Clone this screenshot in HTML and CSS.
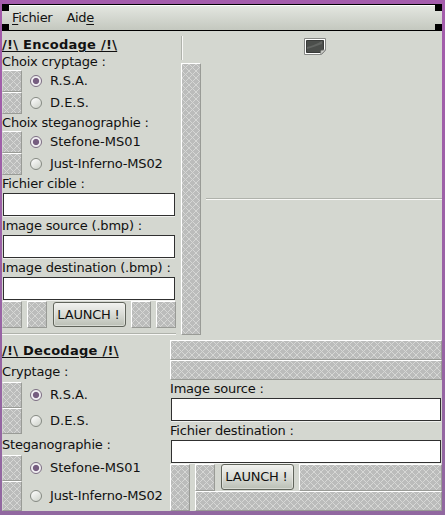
FILE: index.html
```html
<!DOCTYPE html>
<html lang="fr">
<head>
<meta charset="utf-8">
<title>Encodage / Decodage</title>
<link rel="stylesheet" href="styles.css">
</head>
<body>
<div class="window">
  <nav class="menubar"><span class="menu"><u>F</u>ichier</span><span class="menu">Aid<u>e</u></span></nav>
  <main class="content">
    <section class="top">
      <div class="encode">
        <h1>/!\ Encodage /!\</h1>
        <div class="label first">Choix cryptage :</div>
        <div class="option"><i class="slot"></i><span class="radio on"></span><span>R.S.A.</span></div>
        <div class="option"><i class="slot"></i><span class="radio"></span><span>D.E.S.</span></div>
        <div class="label first">Choix steganographie :</div>
        <div class="option"><i class="slot"></i><span class="radio on"></span><span>Stefone-MS01</span></div>
        <div class="option"><i class="slot"></i><span class="radio"></span><span class="tight">Just-Inferno-MS02</span></div>
        <div class="label">Fichier cible :</div>
        <div class="entry"></div>
        <div class="label field">Image source (.bmp) :</div>
        <div class="entry"></div>
        <div class="label field">Image destination (.bmp) :</div>
        <div class="entry"></div>
        <div class="actions"><i class="slot"></i><i class="slot"></i><span class="button">LAUNCH !</span><i class="slot"></i><i class="slot"></i></div>
        <div class="hline"></div>
      </div>
      <div class="divider"><div class="vline"></div><i class="slot"></i></div>
      <div class="preview">
        <svg class="picture" width="22" height="18" viewBox="0 0 22 18">
          <path d="M.5.5h21v12l-4 4H.5z" fill="#fff" stroke="#858784"/>
          <path d="M2.500 2.500h17v9l-2.500 3h-14.500z" fill="#4b4e4b" stroke="#3a3c3a"/>
          <path d="M3 9Q9 8 18 3V6Q10 9 3 11z" fill="#626562"/>
          <path d="M16.500 16.500l.5-4 4.500-.5z" fill="#d3d5d0" stroke="#8b8d88" stroke-width=".7"/>
        </svg>
        <div class="hline"></div>
      </div>
    </section>
    <section class="bottom">
      <div class="decode">
        <h1>/!\ Decodage /!\</h1>
        <div class="label">Cryptage :</div>
        <div class="option tall"><i class="slot"></i><span class="radio on"></span><span>R.S.A.</span></div>
        <div class="option tall"><i class="slot"></i><span class="radio"></span><span>D.E.S.</span></div>
        <div class="label steg">Steganographie :</div>
        <div class="option tall"><i class="slot"></i><span class="radio on"></span><span>Stefone-MS01</span></div>
        <div class="option last"><i class="slot"></i><span class="radio"></span><span class="tight">Just-Inferno-MS02</span></div>
      </div>
      <div class="files">
        <i class="slot wide"></i>
        <i class="slot wide"></i>
        <div class="label">Image source :</div>
        <div class="entry"></div>
        <div class="label field">Fichier destination :</div>
        <div class="entry"></div>
        <div class="footer">
          <i class="slot"></i>
          <div class="launch">
            <div class="run"><i class="slot"></i><span class="button">LAUNCH !</span><i class="slot fill"></i></div>
            <i class="slot wide"></i>
          </div>
        </div>
      </div>
    </section>
  </main>
</div>
</body>
</html>
```
FILE: styles.css
```css
* { box-sizing: border-box; }
body {
  margin: 0;
  width: 445px;
  height: 515px;
  overflow: hidden;
  background: linear-gradient(#a45cac, #9168a0);
  padding: 4px 3px 4px 2px;
  font: 13px/18px "DejaVu Sans", sans-serif;
  letter-spacing: -.2px;
  color: #111;
  white-space: nowrap;
}
.window { height: 507px; background: #d4d7d0; }
.menubar {
  height: 27px;
  display: flex;
  gap: 14px;
  padding: 4px 9px 0 10px;
  letter-spacing: -.3px;
  border-top: 1px solid #000;
  border-bottom: 1px solid #000;
  background:
    linear-gradient(#000, #000) 0 0 / 7px 6px no-repeat,
    linear-gradient(#000, #000) 0 100% / 7px 6px no-repeat,
    linear-gradient(#000, #000) 100% 0 / 7px 6px no-repeat,
    linear-gradient(#000, #000) 100% 100% / 7px 6px no-repeat,
    linear-gradient(#fff, #fff) 0 0 / 100% 1px no-repeat,
    linear-gradient(#e4e7e1, #c4c8bf);
}
u { text-underline-offset: 2px; }
.top { display: flex; height: 305px; }
.encode { width: 174px; padding-top: 5px; margin-right: 5px; }
h1 {
  margin: 0;
  height: 17px;
  font-size: 13px;
  line-height: 18px;
  letter-spacing: .27px;
  text-decoration: underline;
  text-underline-offset: 2px;
}
.label { height: 18px; }
.field { height: 19px; padding-top: 1px; }
.first { height: 17px; }
.option { height: 22px; display: flex; align-items: center; letter-spacing: 0; }
.tight { letter-spacing: -.17px; }
.tall { height: 26px; }
.last { height: 30px; }
.option .radio { margin: 0 8px; }
.slot {
  display: block;
  flex: none;
  width: 20px;
  align-self: stretch;
  border: 1px solid;
  border-color: #fff #999b96 #999b96 #fff;
  background:
    linear-gradient(45deg, transparent 43%, #d6d7d5 43% 57%, transparent 57%) 0 0 / 7px 7px,
    linear-gradient(-45deg, transparent 43%, #d6d7d5 43% 57%, transparent 57%) 0 0 / 7px 7px,
    #bbbcbb;
}
.option .slot, .actions .slot:first-child { border-left-color: #d0d2cd; }
.wide { width: 100%; height: 20px; }
.radio {
  flex: none;
  width: 12px;
  height: 12px;
  border: 1px solid #858982;
  border-radius: 50%;
  background: linear-gradient(145deg, #fff, #cdd1c9);
}
.on { background: radial-gradient(circle, #765d80 0 2.700px, #f1eff2 3.600px); border-color: #7c6e83; }
.entry {
  height: 23px;
  margin: 0 1px 0 0;
  border: 1px solid #303030;
  background: #fff;
  box-shadow: 0 1px #f0f1ee;
}
.encode .entry { margin-left: 1px; }
.actions { height: 28px; padding-top: 1px; display: flex; gap: 5px; }
.button {
  flex: none;
  width: 73px;
  height: 25px;
  margin: 1px 0 0 1px;
  padding-right: 2px;
  border: 1px solid #60645b;
  border-radius: 3px;
  text-align: center;
  line-height: 24px;
  background: linear-gradient(#f1f2ef, #d9dbd5 50%, #babfb5);
  box-shadow: inset 0 0 0 1px #f3f4f080;
}
.actions .button { margin-right: -1px; }
.actions .button + .slot { margin-left: 1px; }
.hline { height: 2px; border-top: 1px solid #afb2ab; border-bottom: 1px solid #f8f8f6; }
.encode .hline { margin-top: 5px; }
.divider { width: 20px; display: flex; flex-direction: column; padding: 5px 0 1px; }
.vline { width: 2px; height: 24px; margin-bottom: 3px; border-left: 1px solid #afb2ab; border-right: 1px solid #f8f8f6; }
.divider .slot { flex: 1; }
.preview { flex: 1; margin-left: 5px; padding-top: 7px; }
.picture { display: block; margin: 0 0 142px 98px; }
.bottom { display: flex; height: 175px; }
.decode { width: 168px; padding-top: 6px; }
.decode h1 { height: 21px; }
.decode .label { height: 19px; }
.decode .steg { height: 21px; padding-top: 2px; }
.files { flex: 1; padding-top: 4px; }
.files .entry { margin-left: 1px; }
.footer { display: flex; gap: 5px; height: 48px; padding-top: 1px; }
.launch { flex: 1; }
.run { display: flex; gap: 5px; height: 27px; }
.run .button { margin-top: 0; height: 26px; }
.fill { flex: 1; }
```
